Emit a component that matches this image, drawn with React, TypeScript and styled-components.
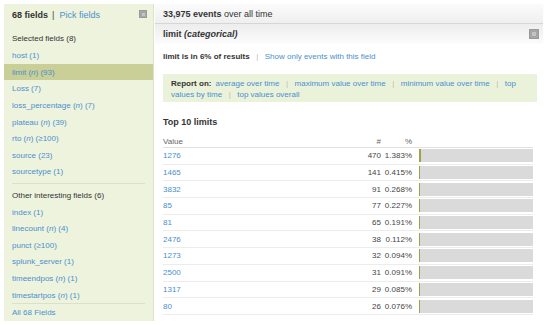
import React from "react";
import styled, { createGlobalStyle } from "styled-components";

const Global = createGlobalStyle`
  html, body { margin: 0; padding: 0; background: #fff; }
  body { font-family: "Liberation Sans", Arial, sans-serif; color: #333; }
  * { box-sizing: border-box; }
`;

const Page = styled.div`
  display: flex;
  align-items: flex-start;
  padding: 4px 0 0 4px;
  width: 550px;
  height: 325px;
  overflow: hidden;
`;

const Sidebar = styled.aside`
  width: 150px;
  height: 317px;
  flex-shrink: 0;
  background: #eef3dd;
  border-right: 1px solid #dde2cc;
  display: flex;
  flex-direction: column;
`;

const SideHeader = styled.div`
  height: 26.7px;
  display: flex;
  align-items: flex-start;
  padding: 5.5px 6px 0 8px;
  font-size: 9px;
  line-height: 11px;
`;

const Count = styled.b`
  color: #333;
`;

const HeadPipe = styled.span`
  color: #444;
  margin: 0 5px 0 4px;
`;

const Link = styled.a`
  color: #4a90cf;
  text-decoration: none;
  cursor: pointer;
`;

const MiniButton = styled.span<{ $size: number }>`
  margin-left: auto;
  margin-top: ${(p) => (p.$size === 8 ? "0.5px" : "0")};
  width: ${(p) => p.$size}px;
  height: ${(p) => p.$size}px;
  background: #a6a6a6;
  border: 1px solid #9a9a9a;
  display: flex;
  align-items: center;
  justify-content: center;
  flex-shrink: 0;
`;

const MiniGlyph = styled.span<{ $size: number }>`
  width: ${(p) => p.$size}px;
  height: ${(p) => p.$size}px;
  background: #c4c4c4;
`;

const GroupTitle = styled.div`
  height: 16.65px;
  display: flex;
  align-items: center;
  padding-left: 8px;
  font-size: 8px;
  color: #333;
`;

const FieldRow = styled.div<{ $selected?: boolean }>`
  height: 16.65px;
  display: flex;
  align-items: center;
  padding-left: 8px;
  font-size: 8px;
  background: ${(p) => (p.$selected ? "#c9cf96" : "transparent")};
`;

const Divider = styled.div<{ $tight?: boolean }>`
  height: 1px;
  background: #dbe1c8;
  margin: ${(p) => (p.$tight ? "0 8px" : "3.3px 8px 2.7px")};
`;

const Main = styled.main`
  width: 388px;
  margin-left: 1px;
  display: flex;
  flex-direction: column;
`;

const EventsBar = styled.div`
  height: 20px;
  display: flex;
  align-items: center;
  padding-left: 8px;
  font-size: 9px;
  background: linear-gradient(#fbfbfb, #efefef);
  border-bottom: 1px solid #d6d6d6;
  box-shadow: 0 1px 1px rgba(0, 0, 0, 0.06);
`;

const FieldHeader = styled.div`
  height: 20px;
  display: flex;
  align-items: center;
  padding: 0 4px 0 8px;
  font-size: 9px;
  font-weight: bold;
  background: linear-gradient(#ededed, #fcfcfc);
`;

const Body = styled.div`
  padding: 0 6px 0 8px;
  display: flex;
  flex-direction: column;
`;

const Coverage = styled.div`
  margin-top: 7px;
  line-height: 12px;
  font-size: 8px;
`;

const Sep = styled.span`
  color: #bbb;
  margin: 0 6.5px;
`;

const ReportLabel = styled.b`
  margin-right: 4px;
`;

const ReportBox = styled.div`
  margin-top: 11px;
  height: 28px;
  padding: 4px 8px 2px 8px;
  line-height: 11px;
  font-size: 8px;
  background: #ebf2da;
`;

const TableTitle = styled.div`
  margin-top: 14px;
  font-size: 9px;
  font-weight: bold;
  line-height: 12px;
`;

const Table = styled.div`
  margin-top: 8px;
  margin-right: 4px;
  display: flex;
  flex-direction: column;
`;

const Row = styled.div<{ $head?: boolean }>`
  display: grid;
  grid-template-columns: 1fr 30px 31px 121px;
  height: ${(p) => (p.$head ? "12px" : "16.7px")};
  align-items: center;
  font-size: 8px;
  color: ${(p) => (p.$head ? "#666" : "#444")};
  border-bottom: 1px solid ${(p) => (p.$head ? "#e2e2e2" : "#ececec")};
`;

const Num = styled.span`
  text-align: right;
`;

const BarCell = styled.span`
  padding-left: 7px;
  display: flex;
`;

const Bar = styled.span`
  flex: 1;
  height: 13px;
  background: #dadada;
  display: flex;
`;

const BarFill = styled.span`
  height: 100%;
  background: #9ea24c;
`;

const N = () => <i>n</i>;

const selected: [React.ReactNode, boolean?][] = [
  ["host (1)"],
  [<>limit (<N />) (93)</>, true],
  ["Loss (7)"],
  [<>loss_percentage (<N />) (7)</>],
  [<>plateau (<N />) (39)</>],
  [<>rto (<N />) (≥100)</>],
  ["source (23)"],
  ["sourcetype (1)"],
];

const others: React.ReactNode[] = [
  "index (1)",
  <>linecount (<N />) (4)</>,
  "punct (≥100)",
  "splunk_server (1)",
  <>timeendpos (<N />) (1)</>,
  <>timestartpos (<N />) (1)</>,
];

const rows: [string, number, number][] = [
  ["1276", 470, 1.383],
  ["1465", 141, 0.415],
  ["3832", 91, 0.268],
  ["85", 77, 0.227],
  ["81", 65, 0.191],
  ["2476", 38, 0.112],
  ["1273", 32, 0.094],
  ["2500", 31, 0.091],
  ["1317", 29, 0.085],
  ["80", 26, 0.076],
];

export default function App() {
  return (
    <>
      <Global />
      <Page>
        <Sidebar>
          <SideHeader>
            <Count>68 fields</Count>
            <HeadPipe>|</HeadPipe>
            <Link>Pick fields</Link>
            <MiniButton $size={8}>
              <MiniGlyph $size={3} />
            </MiniButton>
          </SideHeader>
          <GroupTitle>Selected fields (8)</GroupTitle>
          {selected.map(([label, sel], i) => (
            <FieldRow key={i} $selected={sel}>
              <Link>{label}</Link>
            </FieldRow>
          ))}
          <Divider />
          <GroupTitle>Other interesting fields (6)</GroupTitle>
          {others.map((label, i) => (
            <FieldRow key={i}>
              <Link>{label}</Link>
            </FieldRow>
          ))}
          <Divider $tight />
          <FieldRow>
            <Link>All 68 Fields</Link>
          </FieldRow>
        </Sidebar>
        <Main>
          <EventsBar>
            <b>33,975 events</b>&nbsp;over all time
          </EventsBar>
          <FieldHeader>
            <span>
              limit <i>(categorical)</i>
            </span>
            <MiniButton $size={10}>
              <MiniGlyph $size={4} />
            </MiniButton>
          </FieldHeader>
          <Body>
            <Coverage>
              <b>limit is in 6% of results</b>
              <Sep>|</Sep>
              <Link>Show only events with this field</Link>
            </Coverage>
            <ReportBox>
              <ReportLabel>Report on:</ReportLabel>
              <Link>average over time</Link>
              <Sep>|</Sep>
              <Link>maximum value over time</Link>
              <Sep>|</Sep>
              <Link>minimum value over time</Link>
              <Sep>|</Sep>
              <Link>top</Link> <Link>values by time</Link>
              <Sep>|</Sep>
              <Link>top values overall</Link>
            </ReportBox>
            <TableTitle>Top 10 limits</TableTitle>
            <Table>
              <Row $head>
                <span>Value</span>
                <Num>#</Num>
                <Num>%</Num>
                <span />
              </Row>
              {rows.map(([v, c, p]) => (
                <Row key={v}>
                  <Link>{v}</Link>
                  <Num>{c}</Num>
                  <Num>{p.toFixed(3)}%</Num>
                  <BarCell>
                    <Bar>
                      <BarFill style={{ width: `${p}%` }} />
                    </Bar>
                  </BarCell>
                </Row>
              ))}
            </Table>
          </Body>
        </Main>
      </Page>
    </>
  );
}
